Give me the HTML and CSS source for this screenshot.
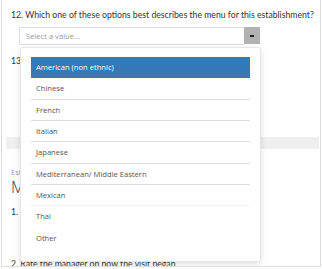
FILE: index.html
```html
<!DOCTYPE html>
<html lang="en">
<head>
    <meta charset="UTF-8">
    <meta name="viewport" content="width=device-width, initial-scale=1.0">
    <title>Survey - Menu</title>
    <link rel="stylesheet" href="styles.css">
</head>
<body>

    <div class="survey">
        <!-- Pregunta 12 -->
        <div class="pregunta">
            <p class="titulo">12. Which one of these options best describes the menu for this establishment?</p>
            <div class="selector">
                <div class="campo">Select a value...</div>
                <div class="boton"><span class="flecha"></span></div>
            </div>
        </div>

        <!-- Pregunta 13 (tapada por la lista) -->
        <div class="pregunta pregunta-13">
            <p class="titulo">13. Was the menu clean and in good condition?</p>
        </div>

        <div class="separador"></div>

        <!-- Siguiente sección -->
        <div class="seccion">
            <p class="etiqueta">Establishment Section 3</p>
            <h2 class="nombre">Management</h2>
            <p class="titulo">1. Was the manager visible on the floor?</p>
            <p class="titulo pregunta-2">2. Rate the manager on how the visit began</p>
        </div>

        <!-- Lista desplegada del selector -->
        <ul class="lista">
            <li class="activo">American (non ethnic)</li>
            <li>Chinese</li>
            <li>French</li>
            <li>Italian</li>
            <li>Japanese</li>
            <li>Mediterranean/ Middle Eastern</li>
            <li class="suave">Mexican</li>
            <li>Thai</li>
            <li class="ultimo">Other</li>
        </ul>
    </div>

</body>
</html>
```

FILE: styles.css
```css
/* Estilos generales */
body {
    margin: 0;
    padding: 0;
    background-color: #fff;
    font-family: "Open Sans", Arial, sans-serif;
    color: #333;
}

.survey {
    position: relative;
    margin: 0 2px 0 1px;
    height: 266px;
    border: 1px solid #ddd;
    border-top: none;
    overflow: hidden;
}

p {
    margin: 0;
}

.titulo {
    font-family: Lato, "Open Sans", sans-serif;
    font-size: 8.7px;
    line-height: 14px;
    margin-left: 9px;
    white-space: nowrap;
}

.pregunta:first-child {
    padding-top: 8px;
}

/* Selector cerrado */
.selector {
    display: flex;
    margin: 5px 0 0 17px;
    width: 241px;
    height: 18px;
}

.campo {
    flex: 1;
    border: 1px solid #ddd;
    border-right: none;
    border-radius: 2px 0 0 2px;
    padding-left: 6px;
    font-size: 7.6px;
    line-height: 16px;
    color: #999;
}

.boton {
    width: 16px;
    height: 17px;
    background-color: #b2b2b2;
    display: flex;
    align-items: center;
    justify-content: center;
}

.flecha {
    width: 4px;
    height: 2px;
    background-color: #222;
}

.pregunta-13 {
    margin-top: 9px;
}

/* Banda gris entre secciones */
.separador {
    margin: 69px 1px 0 4px;
    height: 12px;
    background-color: #efefef;
}

.seccion {
    padding-top: 18px;
}

.etiqueta {
    margin-left: 9px;
    font-size: 7.5px;
    line-height: 10px;
    color: #999;
    white-space: nowrap;
}

.nombre {
    margin: 0 0 0 9px;
    font-size: 16px;
    font-weight: 300;
    line-height: 20px;
    color: #333;
    white-space: nowrap;
}

.seccion .titulo {
    margin-top: 8px;
}

.seccion .pregunta-2 {
    margin-top: 38px;
}

/* Lista desplegada */
.lista {
    position: absolute;
    top: 47px;
    left: 18px;
    width: 219px;
    margin: 0;
    padding: 9px 10px 12px 10px;
    list-style: none;
    background-color: #fff;
    border: 1px solid #e6e6e6;
    border-radius: 3px;
    box-shadow: 0 2px 6px rgba(0, 0, 0, 0.12);
}

.lista li {
    box-sizing: border-box;
    height: 21.33px;
    padding-left: 5px;
    font-size: 7.6px;
    line-height: 20.33px;
    color: #555;
    border-bottom: 1px solid #ddd;
    white-space: nowrap;
}

.lista li.activo {
    background-color: #337ab7;
    color: #fff;
    border-bottom-color: #337ab7;
}

.lista li.suave {
    border-bottom: 1px dotted #e6e6e6;
}

.lista li:nth-last-child(2),
.lista li.ultimo {
    border-bottom-color: transparent;
}
```
